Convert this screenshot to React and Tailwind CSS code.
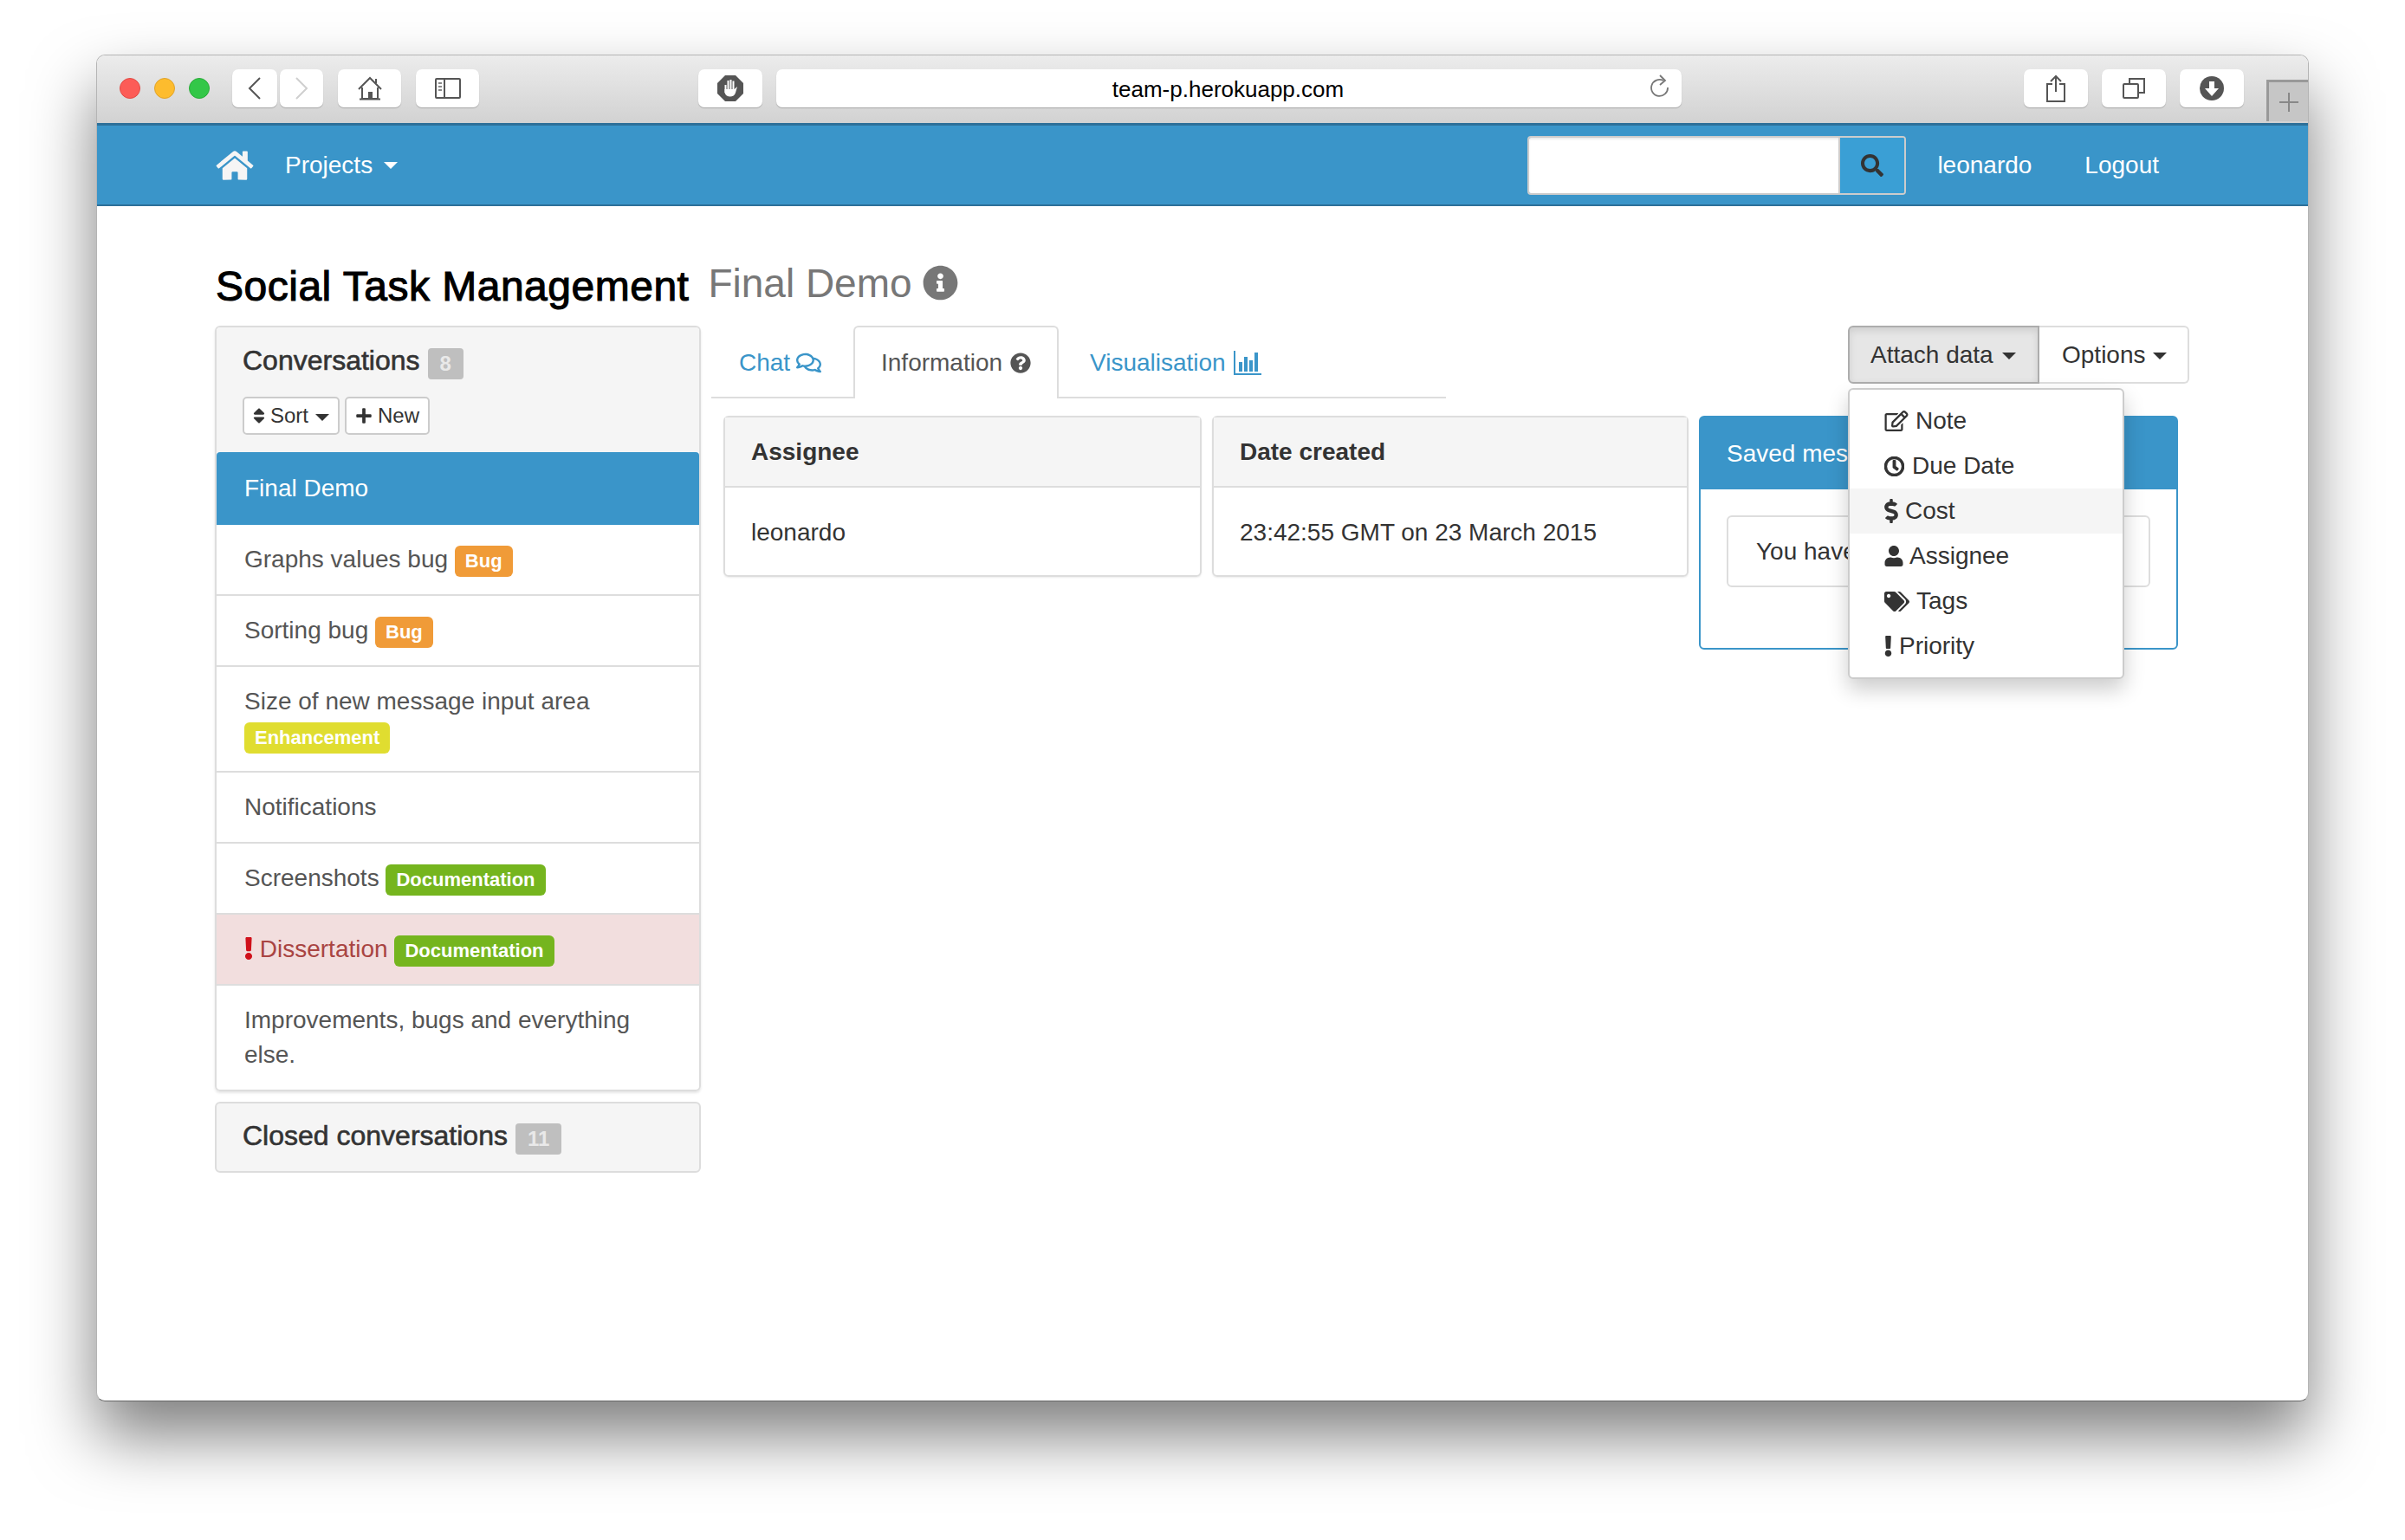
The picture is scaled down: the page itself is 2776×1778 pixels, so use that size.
import React from "react";
import { FaHome, FaSearch, FaInfoCircle, FaRegComments, FaQuestionCircle, FaSort, FaPlus, FaExclamation, FaRegEdit, FaRegClock, FaDollarSign, FaUser, FaTags } from "react-icons/fa";

const Caret = ({ c = "border-t-[#333]" }) => (
  <span className={`inline-block w-0 h-0 border-x-[8px] border-x-transparent border-t-[8px] align-middle ${c}`} />
);

const SBtn = ({ w, ml, children }) => (
  <div className={`${w} ${ml} h-[44px] shrink-0 rounded-[7px] bg-white shadow-[0_1px_1px_rgba(0,0,0,0.22)] flex items-center justify-center`}>{children}</div>
);

const Label = ({ color, children }) => (
  <span className={`inline-block h-[36px] leading-[36px] px-[12px] rounded-[6px] text-[22px] font-bold text-white ${color}`}>{children}</span>
);

const Count = ({ children }) => (
  <span className="inline-block h-[36px] leading-[36px] px-[14px] rounded-[4px] text-[24px] font-bold text-[#e9e9e9] bg-[#bfbfbf]">{children}</span>
);

const Row = ({ children, cls = "" }) => (
  <div className={`px-[32px] py-[20px] text-[28px] leading-[40px] text-[#555] border-b-[2px] border-[#ddd] ${cls}`}>{children}</div>
);

const MenuItem = ({ icon, children, cls = "", gap = "ml-[8px]" }) => (
  <div className={`h-[52px] pl-[40px] flex items-center text-[28px] text-[#333] ${cls}`}>
    {icon}
    <span className={gap}>{children}</span>
  </div>
);

const InfoPanel = ({ w, title, children }) => (
  <div className={`${w} h-[186px] border-[2px] border-[#ddd] rounded-[6px] shadow-[0_1px_2px_rgba(0,0,0,0.08)]`}>
    <div className="h-[81px] bg-[#f5f5f5] border-b-[2px] border-[#ddd] pl-[30px] flex items-center text-[28px] font-bold text-[#333]">{title}</div>
    <div className="pl-[30px] pt-[3px] h-[101px] flex items-center text-[28px] text-[#333]">{children}</div>
  </div>
);

export default function App() {
  return (
    <div className="w-[2776px] h-[1778px] overflow-hidden bg-white pt-[63px] pl-[111px] font-['Liberation_Sans',Arial,sans-serif]">
      <div className="w-[2554px] h-[1555px] rounded-[10px] border border-[#b5b5b5] border-b-[#666] bg-white shadow-[0_40px_75px_rgba(0,0,0,0.5)] flex flex-col overflow-hidden">
        {/* Safari toolbar */}
        <div className="h-[78px] shrink-0 pt-[16px] pl-[26px] flex items-start bg-gradient-to-b from-[#ececec] to-[#d2d2d2]">
          <div className="flex gap-[16px] mt-[10px] shrink-0">
            <span className="w-[24px] h-[24px] rounded-full bg-[#fc5c57] border border-[#e24b45]" />
            <span className="w-[24px] h-[24px] rounded-full bg-[#fdbc2e] border border-[#e0a32a]" />
            <span className="w-[24px] h-[24px] rounded-full bg-[#33c748] border border-[#2aac39]" />
          </div>
          <SBtn w="w-[52px]" ml="ml-[26px]">
            <svg width="16" height="26" viewBox="0 0 16 26" fill="none" stroke="#555" strokeWidth="2"><path d="M14 1 L2 13 L14 25" /></svg>
          </SBtn>
          <SBtn w="w-[50px]" ml="ml-[3px]">
            <svg width="16" height="26" viewBox="0 0 16 26" fill="none" stroke="#cfcfcf" strokeWidth="2"><path d="M2 1 L14 13 L2 25" /></svg>
          </SBtn>
          <SBtn w="w-[73px]" ml="ml-[17px]">
            <svg width="28" height="28" viewBox="0 0 28 28" fill="none" stroke="#555" strokeWidth="2"><path d="M1 15 L14 2 L27 15 M21 8 V3 M5 13 V26 H23 V13 M2 26.5 H26" /><rect x="12" y="18" width="5" height="8" fill="#555" stroke="none" /></svg>
          </SBtn>
          <SBtn w="w-[73px]" ml="ml-[17px]">
            <svg width="30" height="24" viewBox="0 0 30 24" fill="none" stroke="#555" strokeWidth="2"><rect x="1" y="1" width="28" height="22" rx="1" /><path d="M11 1 V23" /><path d="M4 6 H8 M4 10 H8 M4 14 H8" strokeWidth="2" stroke="#888" /></svg>
          </SBtn>
          <SBtn w="w-[74px]" ml="ml-[253px]">
            <svg width="30" height="30" viewBox="0 0 30 30"><path d="M9 0 H21 L30 9 V21 L21 30 H9 L0 21 V9 Z" fill="#555" /><path d="M9.5 20 V11 M12.5 16 V6 M15.5 16 V5 M18.5 16 V6.5" stroke="#fff" strokeWidth="2" fill="none" /><path d="M8.5 16 H19.5 L23 13 L21 20 C19.5 26 10 26 8.5 20 Z" fill="#fff" /></svg>
          </SBtn>
          <SBtn w="w-[1045px]" ml="ml-[16px] relative">
            <span className="text-[26px] leading-none text-black ml-[-2px] mt-[2px]">team-p.herokuapp.com</span>
            <svg className="absolute right-[14px] top-[6px]" width="22" height="28" viewBox="0 0 22 28" fill="none" stroke="#777" strokeWidth="1.8"><path d="M15 7 A9.5 9.5 0 1 0 20 15" /><path d="M11 1 L17 7 L11 12" /></svg>
          </SBtn>
          <SBtn w="w-[74px]" ml="ml-[395px]">
            <svg width="24" height="32" viewBox="0 0 24 32" fill="none" stroke="#555" strokeWidth="2"><path d="M8 11 H2 V31 H22 V11 H16" /><path d="M12 20 V2 M6 8 L12 2 L18 8" /></svg>
          </SBtn>
          <SBtn w="w-[74px]" ml="ml-[16px]">
            <svg width="26" height="24" viewBox="0 0 26 24" fill="none" stroke="#555" strokeWidth="2"><rect x="1" y="7" width="17" height="16" rx="1" /><path d="M8 7 V1 H25 V17 H18" /></svg>
          </SBtn>
          <SBtn w="w-[74px]" ml="ml-[16px]">
            <svg width="28" height="28" viewBox="0 0 28 28"><circle cx="14" cy="14" r="14" fill="#555" /><path d="M11 6 H17 V14 H22 L14 23 L6 14 H11 Z" fill="#fff" /></svg>
          </SBtn>
          <div className="ml-[26px] mt-[12px] w-[48px] h-[48px] shrink-0 bg-[#c6c6c6] border-l-[3px] border-t-[3px] border-[#999] flex items-center justify-center">
            <svg width="22" height="22" viewBox="0 0 22 22" stroke="#888" strokeWidth="2"><path d="M11 0 V22 M0 11 H22" /></svg>
          </div>
        </div>

        {/* Nav */}
        <div className="h-[96px] shrink-0 bg-[#3a95c9] border-t-[3px] border-b-[2px] border-t-[#2d7099] border-b-[#2d7099] pl-[137px] pr-[172px] flex items-center text-white text-[28px]">
          <FaHome className="w-[44px] h-[38px] text-[#f5f5f5]" />
          <span className="ml-[36px]">Projects</span>
          <span className="ml-[13px] inline-block w-0 h-0 border-x-[8px] border-x-transparent border-t-[8px] border-t-white" />
          <div className="ml-auto flex h-[68px] w-[437px] border-[2px] border-[#ccc] rounded-[4px] overflow-hidden">
            <div className="flex-1 bg-white shadow-[inset_0_2px_2px_rgba(0,0,0,0.08)]" />
            <div className="w-[76px] bg-[#3a9fd5] border-l-[2px] border-[#ccc] flex items-center justify-center">
              <FaSearch className="w-[26px] h-[26px] text-[#333]" />
            </div>
          </div>
          <span className="ml-[36px]">leonardo</span>
          <span className="ml-[61px]">Logout</span>
        </div>

        {/* Page */}
        <div className="flex-1 pl-[136px]">
          <div className="h-[138px] flex items-start">
            <h1 className="ml-[1px] mt-[65px] text-[48px] leading-[56px] font-normal tracking-[0.5px] text-black [-webkit-text-stroke:1.1px_#000]">Social Task Management</h1>
            <span className="ml-[22px] mt-[61px] text-[46px] leading-[56px] text-[#777]">Final Demo</span>
            <FaInfoCircle className="ml-[12px] mt-[68px] w-[41px] h-[41px] text-[#777]" />
          </div>

          <div className="flex items-start">
            {/* Sidebar */}
            <div className="w-[561px] shrink-0">
              <div className="border-[2px] border-[#ddd] rounded-[6px] overflow-hidden shadow-[0_2px_3px_rgba(0,0,0,0.1)]">
                <div className="h-[144px] bg-[#f5f5f5] pl-[30px] pt-[18px]">
                  <div className="flex items-center h-[46px] text-[32px] text-[#333] [-webkit-text-stroke:0.6px_#333]">
                    <span className="mb-[6px]">Conversations</span>
                    <span className="ml-[9px] mt-[2px] flex [-webkit-text-stroke:0]"><Count>8</Count></span>
                  </div>
                  <div className="flex gap-[6px] mt-[16px]">
                    <div className="w-[112px] h-[44px] bg-white border-[2px] border-[#ccc] rounded-[5px] flex items-center pl-[10px] text-[24px] text-[#333]">
                      <FaSort className="w-[14px] h-[22px]" />
                      <span className="ml-[6px]">Sort</span>
                      <span className="ml-[8px]"><Caret /></span>
                    </div>
                    <div className="w-[98px] h-[44px] bg-white border-[2px] border-[#ccc] rounded-[5px] flex items-center pl-[10px] text-[24px] text-[#333]">
                      <FaPlus className="w-[20px] h-[20px]" />
                      <span className="ml-[6px]">New</span>
                    </div>
                  </div>
                </div>
                <div className="h-[84px] bg-[#3a95c9] text-white text-[28px] pl-[32px] flex items-center rounded-t-[4px]">Final Demo</div>
                <Row>Graphs values bug <Label color="bg-[#f09b38]">Bug</Label></Row>
                <Row>Sorting bug <Label color="bg-[#f09b38]">Bug</Label></Row>
                <Row>Size of new message input area <Label color="bg-[#e0dd30]">Enhancement</Label></Row>
                <Row>Notifications</Row>
                <Row>Screenshots <Label color="bg-[#75b51e]">Documentation</Label></Row>
                <Row cls="bg-[#f2dede] !text-[#a94442]">
                  <FaExclamation className="inline-block w-[10px] h-[26px] text-[#d0111b] align-[-3px]" /> Dissertation <Label color="bg-[#75b51e]">Documentation</Label>
                </Row>
                <Row cls="!border-b-0">Improvements, bugs and everything else.</Row>
              </div>
              <div className="mt-[12px] h-[82px] border-[2px] border-[#ddd] rounded-[6px] bg-[#f5f5f5] pl-[30px] flex items-center text-[32px] text-[#333] [-webkit-text-stroke:0.6px_#333]">
                <span className="mb-[4px]">Closed conversations</span>
                <span className="ml-[9px] mt-[4px] flex [-webkit-text-stroke:0]"><Count>11</Count></span>
              </div>
            </div>

            {/* Main */}
            <div className="ml-[12px] flex-1">
              <div className="flex items-start">
                <div className="w-[848px] h-[84px] border-b-[2px] border-[#ddd] flex items-end text-[28px]">
                  <div className="w-[164px] h-[82px] pl-[32px] pt-[3px] flex items-center text-[#3a95c9]">
                    Chat
                    <FaRegComments className="ml-[7px] w-[29px] h-[26px]" />
                  </div>
                  <div className="w-[237px] h-[84px] mb-[-2px] border-[2px] border-b-0 border-[#ddd] rounded-t-[6px] bg-white pl-[30px] flex items-center text-[#555]">
                    Information
                    <FaQuestionCircle className="ml-[9px] w-[24px] h-[24px]" />
                  </div>
                  <div className="pl-[36px] pt-[3px] h-[82px] flex items-center text-[#3a95c9]">
                    Visualisation
                    <svg className="ml-[9px]" width="32" height="28" viewBox="0 0 32 28" fill="#3a95c9">
                      <path d="M0 0 H2 V26 H32 V28 H0 Z" />
                      <rect x="6" y="13" width="4" height="11" />
                      <rect x="12" y="7" width="4" height="17" />
                      <rect x="18" y="11" width="4" height="13" />
                      <rect x="24" y="2" width="4" height="22" />
                    </svg>
                  </div>
                </div>
                <div className="ml-[464px] relative flex text-[28px] text-[#333]">
                  <div className="w-[221px] h-[67px] bg-[#e6e6e6] border-[2px] border-[#adadad] rounded-l-[6px] shadow-[inset_0_4px_8px_rgba(0,0,0,0.1)] flex items-center pl-[24px]">
                    Attach data
                    <span className="ml-[10px]"><Caret /></span>
                  </div>
                  <div className="w-[173px] h-[67px] bg-white border-[2px] border-l-0 border-[#ddd] rounded-r-[6px] flex items-center pl-[26px]">
                    Options
                    <span className="ml-[8px]"><Caret /></span>
                  </div>
                  {/* Dropdown */}
                  <div className="absolute z-10 left-0 top-[72px] w-[319px] h-[336px] py-[10px] bg-white border-[2px] border-[#ccc] rounded-[6px] shadow-[0_12px_24px_rgba(0,0,0,0.2)]">
                    <MenuItem icon={<FaRegEdit className="w-[28px] h-[24px]" />}>Note</MenuItem>
                    <MenuItem gap="ml-[9px]" icon={<FaRegClock className="w-[23px] h-[23px] [stroke-width:30]" />}>Due Date</MenuItem>
                    <MenuItem cls="bg-[#f5f5f5]" gap="ml-[8px]" icon={<FaDollarSign className="w-[16px] h-[28px]" />}>Cost</MenuItem>
                    <MenuItem gap="ml-[7px]" icon={<FaUser className="w-[22px] h-[24px]" />}>Assignee</MenuItem>
                    <MenuItem gap="ml-[8px]" icon={<FaTags className="w-[29px] h-[25px]" />}>Tags</MenuItem>
                    <MenuItem gap="ml-[8px]" icon={<FaExclamation className="w-[9px] h-[24px]" />}>Priority</MenuItem>
                  </div>
                </div>
              </div>

              <div className="mt-[20px] pl-[14px] flex items-start gap-[12px]">
                <InfoPanel w="w-[552px]" title="Assignee">leonardo</InfoPanel>
                <InfoPanel w="w-[550px]" title="Date created">23:42:55 GMT on 23 March 2015</InfoPanel>
                <div className="w-[553px] h-[270px] border-[2px] border-[#3a95c9] rounded-[6px]">
                  <div className="h-[83px] bg-[#3a95c9] pl-[30px] flex items-center text-[28px] text-white">Saved messages</div>
                  <div className="mx-[30px] mt-[30px] h-[83px] border-[2px] border-[#ddd] rounded-[6px] pl-[32px] flex items-center text-[28px] text-[#333]">You have no messages</div>
                </div>
              </div>
            </div>
          </div>
        </div>
      </div>
    </div>
  );
}
